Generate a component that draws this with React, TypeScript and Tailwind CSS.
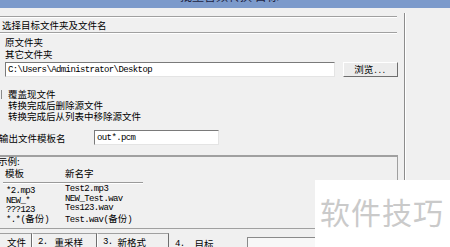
import React from "react";

const Mono = ({ children }: { children: React.ReactNode }) => (
  <span className="[font-family:'Liberation_Mono',monospace] text-[9px] tracking-[-0.6px]">{children}</span>
);

const Etched = ({ w }: { w: string }) => (
  <div className={`${w} h-[2px] border-t border-[#a0a0a0] border-b border-b-white shrink-0`} />
);

export default function App() {
  return (
    <div className="relative w-[450px] h-[247px] overflow-hidden bg-[#f0f0f0] text-black [font-family:'Noto_Sans_CJK_SC',sans-serif] text-[9.5px] leading-[12px]">
      {/* title bar */}
      <div className="h-[8px] bg-[#7c9acb] overflow-hidden">
        <div className="pl-[180px] -mt-[11px] text-[12px] leading-[14px] text-[#1c2340]">批量音频转换 目标</div>
      </div>

      <div className="flex">
        {/* left column */}
        <div className="w-[404px] flex flex-col shrink-0">
          <div className="h-[8px]" />
          <Etched w="w-[397px]" />
          <div className="h-[14px] pl-[2px] flex items-center">选择目标文件夹及文件名</div>
          <Etched w="w-[397px]" />

          <div className="pl-[5px] pt-[2px] flex flex-col">
            <div className="h-[12px]">原文件夹</div>
            <div className="h-[12px]">其它文件夹</div>
            <div className="flex mt-[2px]">
              <div className="w-[330px] h-[15px] bg-white border border-t-[#7a7a7a] border-l-[#7a7a7a] border-b-[#e4e4e4] border-r-[#e4e4e4] pl-[2px] flex items-center">
                <Mono>C:\Users\Administrator\Desktop</Mono>
              </div>
              <div className="ml-[8px] w-[55px] h-[15px] border border-t-white border-l-white border-b-[#6e6e6e] border-r-[#6e6e6e] bg-[#ececec] flex items-center justify-center leading-[11px]">
                浏览<span className="ml-[1px] tracking-[1.5px]">...</span>
              </div>
            </div>
          </div>

          <div className="h-[12px]" />
          <div className="flex flex-col leading-[11px]">
            <div className="flex items-center h-[11px]">
              <div className="w-[2px] h-[9px] border-r border-[#8a8a8a]" />
              <span className="ml-[6px]">覆盖现文件</span>
            </div>
            <div className="pl-[8px] h-[11px]">转换完成后删除源文件</div>
            <div className="pl-[8px] h-[11px]">转换完成后从列表中移除源文件</div>
          </div>

          <div className="flex items-center h-[15px] mt-[8px]">
            <span className="w-[95px] shrink-0 -ml-[1px]">输出文件模板名</span>
            <div className="w-[125px] h-[15px] bg-white border border-t-[#7a7a7a] border-l-[#7a7a7a] border-b-[#e4e4e4] border-r-[#e4e4e4] pl-[2px] flex items-center">
              <Mono>out*.pcm</Mono>
            </div>
          </div>

          {/* example group */}
          <div className="mt-[10px] w-[398px] border-t-2 border-t-[#a0a0a0] border-r border-r-[#a0a0a0] border-b border-b-[#a0a0a0] pb-[5px] flex flex-col leading-[11px]">
            <div className="-ml-[2px] -mt-[1px] h-[11px]">示例:</div>
            <div className="flex mt-[1px] h-[11px]">
              <span className="w-[65px] pl-[5px]">模板</span>
              <span>新名字</span>
            </div>
            <div className="mt-[3px] ml-[3px] w-[140px] h-[2px] border-t border-[#9a9a9a] border-b border-b-white" />
            <div className="flex flex-col leading-[9.5px] mt-[1px]">
              <div className="flex h-[9.5px]">
                <span className="w-[65px] pl-[6px]"><Mono>*2.mp3</Mono></span>
                <Mono>Test2.mp3</Mono>
              </div>
              <div className="flex h-[9.5px]">
                <span className="w-[65px] pl-[6px]"><Mono>NEW_*</Mono></span>
                <Mono>NEW_Test.wav</Mono>
              </div>
              <div className="flex h-[9.5px]">
                <span className="w-[65px] pl-[6px]"><Mono>???123</Mono></span>
                <Mono>Tes123.wav</Mono>
              </div>
              <div className="flex h-[9.5px]">
                <span className="w-[65px] pl-[6px]"><Mono>*.*(</Mono>备份<Mono>)</Mono></span>
                <span><Mono>Test.wav(</Mono>备份<Mono>)</Mono></span>
              </div>
            </div>
          </div>

          {/* tabs */}
          <div className="mt-[4px] flex h-[14px] leading-[11px]">
            <div className="w-[32px] border-t border-t-[#a0a0a0] border-r border-r-[#6e6e6e] pl-[7px] pt-[3px]">文件</div>
            <div className="w-[65px] border-t border-t-[#a0a0a0] border-l border-l-white border-r border-r-[#6e6e6e] pl-[5px] pt-[3px] flex">
              <Mono>2.</Mono><span className="ml-[7px]">重采样</span>
            </div>
            <div className="w-[72px] border-t border-t-[#a0a0a0] border-l border-l-white border-r border-r-[#6e6e6e] pl-[5px] pt-[3px] flex">
              <Mono>3.</Mono><span className="ml-[5px]">新格式</span>
            </div>
            <div className="w-[78px] pl-[6px] pt-[6px] flex">
              <Mono>4.</Mono><span className="ml-[10px]">目标</span>
            </div>
            <div className="mt-[4px] flex-1 border-l border-t border-[#8a8a8a] bg-[#f7f7f7]" />
          </div>
        </div>

        {/* right panel separator */}
        <div className="mt-[5px] w-[1px] h-[240px] bg-[#8c8c8c] shrink-0" />
        <div className="mt-[5px] w-[1px] h-[240px] bg-white shrink-0" />
        <div className="flex-1" />
      </div>

      {/* watermark overlay */}
      <div className="absolute left-[315px] top-[180px] right-0 bottom-0 bg-white">
        <div className="pl-[5px] pt-[15px] text-[30px] leading-[32px] tracking-[1px] text-[#cacaca]">软件技巧</div>
      </div>
    </div>
  );
}
